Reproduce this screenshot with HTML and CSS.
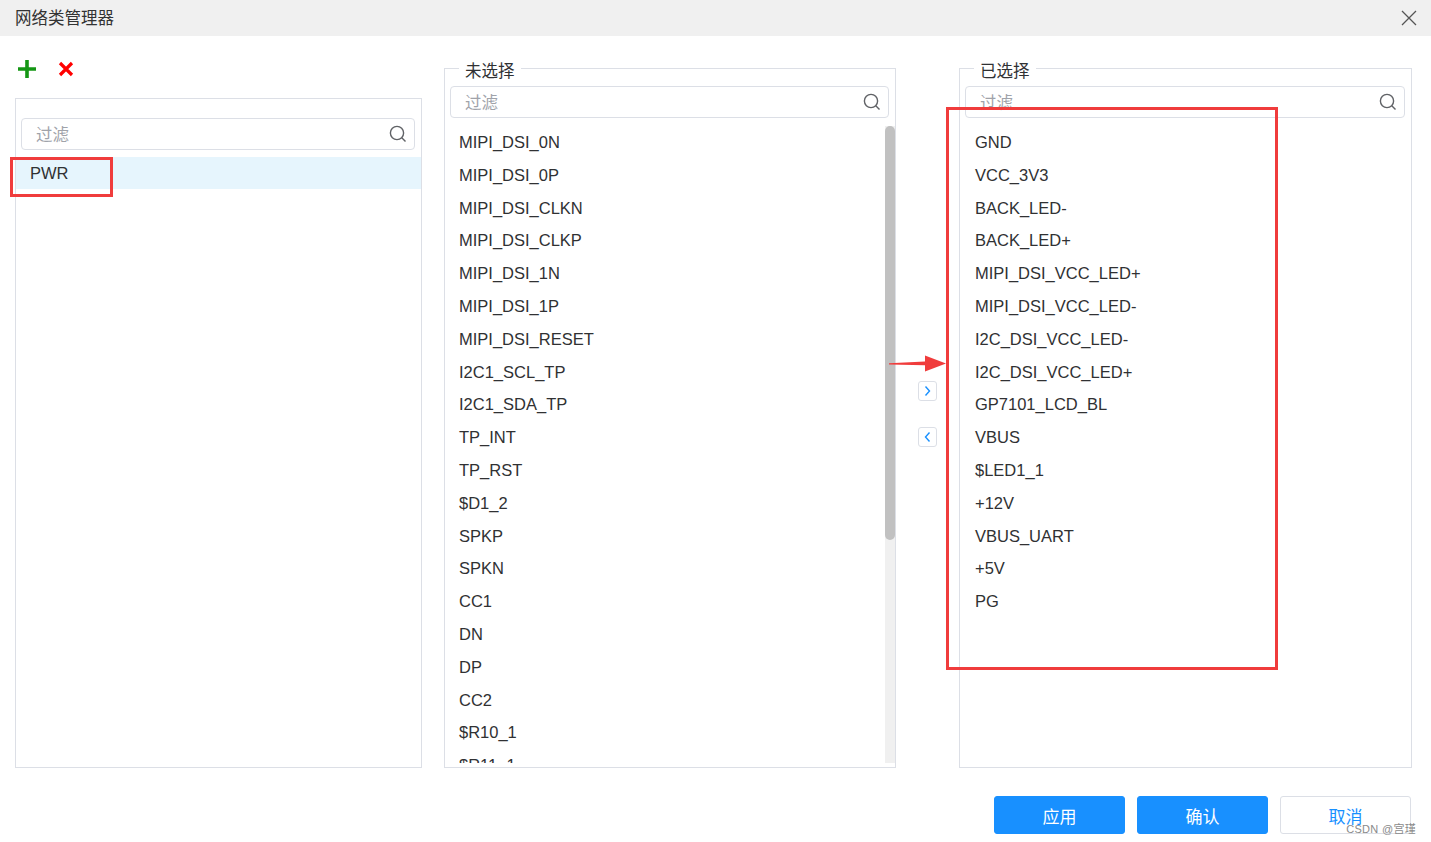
FILE: index.html
```html
<!DOCTYPE html>
<html lang="zh-CN">
<head>
<meta charset="utf-8">
<title>网络类管理器</title>
<link rel="stylesheet" href="styles.css">
</head>
<body>
<div class="dialog">
  <div class="titlebar">
    <span class="title">网络类管理器</span>
    <svg class="close" width="16" height="16" viewBox="0 0 16 16"><path d="M1 1L15 15M15 1L1 15" stroke="#555" stroke-width="1.3" fill="none"/></svg>
  </div>
  <div class="main">
    <div class="left-col">
      <div class="toolbar">
        <svg class="ico-add" width="18" height="18" viewBox="0 0 18 18"><path d="M9 0V18M0 9H18" stroke="#149614" stroke-width="3.6"/></svg>
        <svg class="ico-del" width="16" height="16" viewBox="0 0 16 16"><path d="M2 2L14 14M14 2L2 14" stroke="#f00" stroke-width="3.2"/></svg>
      </div>
      <div class="class-panel">
        <div class="filter filter-left">
          <span class="ph">过滤</span>
          <svg class="search" width="18" height="18" viewBox="0 0 18 18"><circle cx="8" cy="8" r="6.6" stroke="#606266" stroke-width="1.4" fill="none"/><path d="M12.8 12.8L16.5 16.5" stroke="#606266" stroke-width="1.4"/></svg>
        </div>
        <div class="class-row selected">PWR</div>
      </div>
      <div class="mark mark-pwr"></div>
    </div>

    <fieldset class="group group-mid">
      <legend>未选择</legend>
      <div class="filter">
        <span class="ph">过滤</span>
        <svg class="search" width="18" height="18" viewBox="0 0 18 18"><circle cx="8" cy="8" r="6.6" stroke="#606266" stroke-width="1.4" fill="none"/><path d="M12.8 12.8L16.5 16.5" stroke="#606266" stroke-width="1.4"/></svg>
      </div>
      <div class="list-wrap">
        <ul class="list list-mid">
          <li>MIPI_DSI_0N</li>
          <li>MIPI_DSI_0P</li>
          <li>MIPI_DSI_CLKN</li>
          <li>MIPI_DSI_CLKP</li>
          <li>MIPI_DSI_1N</li>
          <li>MIPI_DSI_1P</li>
          <li>MIPI_DSI_RESET</li>
          <li>I2C1_SCL_TP</li>
          <li>I2C1_SDA_TP</li>
          <li>TP_INT</li>
          <li>TP_RST</li>
          <li>$D1_2</li>
          <li>SPKP</li>
          <li>SPKN</li>
          <li>CC1</li>
          <li>DN</li>
          <li>DP</li>
          <li>CC2</li>
          <li>$R10_1</li>
          <li>$R11_1</li>
        </ul>
        <div class="scrollbar"><div class="thumb"></div></div>
      </div>
    </fieldset>

    <div class="transfer">
      <button class="tbtn"><svg width="9" height="12" viewBox="0 0 9 12"><path d="M2.5 1.5L6.5 6L2.5 10.5" stroke="#1890ff" stroke-width="1.4" fill="none"/></svg></button>
      <button class="tbtn"><svg width="9" height="12" viewBox="0 0 9 12"><path d="M6.5 1.5L2.5 6L6.5 10.5" stroke="#1890ff" stroke-width="1.4" fill="none"/></svg></button>
      <svg class="red-arrow" width="58" height="20" viewBox="0 0 58 20"><path d="M0 9.2L36 7.6L36 1.5L57 9.5L36 17.5L36 11.2L0 10.6Z" fill="#f03c3c"/></svg>
    </div>

    <fieldset class="group group-right">
      <legend>已选择</legend>
      <div class="filter">
        <span class="ph">过滤</span>
        <svg class="search" width="18" height="18" viewBox="0 0 18 18"><circle cx="8" cy="8" r="6.6" stroke="#606266" stroke-width="1.4" fill="none"/><path d="M12.8 12.8L16.5 16.5" stroke="#606266" stroke-width="1.4"/></svg>
      </div>
      <ul class="list list-right">
        <li>GND</li>
        <li>VCC_3V3</li>
        <li>BACK_LED-</li>
        <li>BACK_LED+</li>
        <li>MIPI_DSI_VCC_LED+</li>
        <li>MIPI_DSI_VCC_LED-</li>
        <li>I2C_DSI_VCC_LED-</li>
        <li>I2C_DSI_VCC_LED+</li>
        <li>GP7101_LCD_BL</li>
        <li>VBUS</li>
        <li>$LED1_1</li>
        <li>+12V</li>
        <li>VBUS_UART</li>
        <li>+5V</li>
        <li>PG</li>
      </ul>
      <div class="mark mark-right"></div>
    </fieldset>
  </div>
  <div class="footer">
    <button class="btn primary">应用</button>
    <button class="btn primary">确认</button>
    <button class="btn plain">取消</button>
    <span class="watermark">CSDN @宫瑾</span>
  </div>
</div>
</body>
</html>
```
FILE: styles.css
```css
* { box-sizing: border-box; }
html, body { margin: 0; padding: 0; background: #fff; }
body {
  font-family: "Liberation Sans", "Noto Sans CJK SC", sans-serif;
  font-size: 16.5px;
  color: #303133;
}
.dialog { width: 1431px; height: 842px; position: relative; overflow: hidden; }

.titlebar {
  height: 36px;
  background: #f0f0f0;
  display: flex;
  align-items: center;
  justify-content: space-between;
  padding: 0 14px 0 15px;
}
.title { font-size: 16.5px; color: #333; line-height: 36px; margin-top: -1px; }
.close { display: block; }

.main {
  display: flex;
  align-items: flex-start;
  padding: 21px 19px 0 15px;
  height: 732px;
}

.left-col { width: 407px; position: relative; flex: none; }
.toolbar {
  height: 41px;
  display: flex;
  align-items: flex-start;
  padding: 3px 0 0 3px;
  gap: 22px;
}
.ico-add { display: block; }
.ico-del { display: block; margin-top: 1px; }
.class-panel {
  height: 670px;
  border: 1px solid #dcdfe6;
  padding-top: 19px;
}
.filter {
  height: 32px;
  border: 1px solid #dcdfe6;
  border-radius: 4px;
  display: flex;
  align-items: center;
  justify-content: space-between;
  padding: 0 7px 0 14px;
  background: #fff;
}
.filter-left { margin: 0 6px 0 5px; }
.ph { color: #a0a3aa; font-size: 16.5px; }
.search { display: block; }
.class-row {
  margin-top: 7px;
  height: 32px;
  line-height: 32px;
  padding-left: 14px;
}
.class-row.selected { background: #e6f5fd; }

.group {
  margin: 0 0 0 22px;
  padding: 0;
  border: 1px solid #dcdfe6;
  min-width: 0;
  height: 711px;
  flex: none;
  position: relative;
}
.group legend {
  font-size: 16.5px;
  line-height: 16px;
  padding: 6px 6px 0;
  height: 22px;
  margin-left: 14px;
  color: #303133;
}
.group-mid { width: 452px; }
.group-right { width: 453px; }
.group .filter { margin: 7px 6px 0 5px; }

.list-wrap {
  display: flex;
  margin-top: 8px;
  height: 637px;
}
.list {
  list-style: none;
  margin: 0;
  padding: 0;
  height: 637px;
  overflow: hidden;
}
.list-mid { flex: 1; }
.list-right { margin-top: 8px; }
.list li {
  height: 32.8px;
  line-height: 32.8px;
  white-space: nowrap;
}
.list-mid li { padding-left: 14px; }
.list-right li { padding-left: 15px; }
.scrollbar {
  width: 10px;
  background: #f0f0f0;
  flex: none;
}
.thumb {
  height: 414px;
  background: #c1c1c1;
  border-radius: 5px;
}

.transfer {
  margin-left: 22px;
  width: 19px;
  height: 711px;
  display: flex;
  flex-direction: column;
  justify-content: center;
  gap: 26px;
  position: relative;
  padding-top: 2px;
  flex: none;
}
.tbtn {
  width: 19px;
  height: 20px;
  border: 1px solid #dcdfe6;
  border-radius: 3px;
  background: #fff;
  padding: 0;
  display: flex;
  align-items: center;
  justify-content: center;
}
.tbtn svg { display: block; }
.red-arrow { position: absolute; left: -29px; top: 297px; }

.mark { position: absolute; border: 3px solid #f03c3c; pointer-events: none; }
.mark-pwr { left: -5px; top: 100px; width: 103px; height: 40px; }
.mark-right { left: -14px; top: 28px; width: 332px; height: 563px; }

.footer {
  display: flex;
  justify-content: flex-end;
  gap: 12px;
  padding: 28px 20px 0 0;
  position: relative;
}
.btn {
  width: 131px;
  height: 38px;
  border-radius: 3px;
  font-family: "Liberation Sans", "Noto Sans CJK SC", sans-serif;
  font-size: 17px;
  padding: 0;
}
.btn.primary { background: #1890ff; color: #fff; border: 1px solid #1890ff; }
.btn.plain { background: #fff; color: #1890ff; border: 1px solid #dcdfe6; }
.watermark {
  position: absolute;
  right: 15px;
  top: 52px;
  font-size: 11px;
  color: #8a8a8a;
  letter-spacing: 0.3px;
}
```
